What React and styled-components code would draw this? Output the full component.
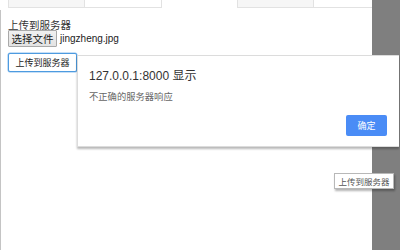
import React from 'react';
import styled, { createGlobalStyle } from 'styled-components';

const GlobalStyle = createGlobalStyle`
  html, body {
    margin: 0;
    padding: 0;
    background: #ffffff;
    overflow: hidden;
  }
  body {
    font-family: 'Liberation Sans', 'Noto Sans CJK SC', sans-serif;
  }
`;

const Page = styled.div`
  display: flex;
  width: 400px;
  height: 250px;
  position: relative;
`;

const Main = styled.div`
  width: 372px;
  display: flex;
  flex-direction: column;
`;

const ScrollGutter = styled.div`
  width: 28px;
  background: #7f7f7f;
`;

const TabStrip = styled.div`
  display: flex;
  height: 8px;
  padding-left: 8px;
`;

const Tab = styled.div`
  box-sizing: border-box;
  width: ${(p) => p.width}px;
  margin-left: ${(p) => p.offset || 0}px;
  height: 8px;
  border: 1px solid #e2e2e2;
  border-top: none;
  border-left: ${(p) => (p.noLeft ? 'none' : '1px solid #e2e2e2')};
  border-right: ${(p) => (p.noRight ? 'none' : '1px solid #e2e2e2')};
  background: ${(p) => (p.shaded ? '#f6f6f6' : '#ffffff')};
`;

const Panel = styled.div`
  flex: 1;
  margin-top: 2px;
  border-left: 1px solid #c4c4c4;
  padding: 9px 0 0 7px;
`;

const Label = styled.div`
  font-size: 10.5px;
  line-height: 11px;
  color: #333;
  font-family: 'Noto Sans CJK SC', sans-serif;
`;

const FileRow = styled.div`
  display: flex;
  align-items: center;
  gap: 3px;
  height: 17px;
`;

const FileButton = styled.div`
  box-sizing: border-box;
  width: 49px;
  height: 17px;
  border: 1px solid #a9a9a9;
  border-radius: 1px;
  background: linear-gradient(#f0f0f0, #e3e3e3);
  font-family: 'Noto Sans CJK SC', sans-serif;
  font-size: 10.5px;
  line-height: 15px;
  text-align: center;
  color: #222;
`;

const FileName = styled.span`
  font-size: 10px;
  color: #222;
`;

const UploadButton = styled.button`
  box-sizing: border-box;
  margin-top: 6px;
  width: 69px;
  height: 19px;
  padding: 0;
  background: #ffffff;
  border: 1px solid #4d9be0;
  box-shadow: 0 0 0 0.5px #8fc0ee;
  border-radius: 2px;
  font-family: 'Noto Sans CJK SC', sans-serif;
  font-size: 9px;
  color: #222;
`;

const Dialog = styled.div`
  position: absolute;
  left: 77px;
  top: 55px;
  width: 322px;
  height: 92px;
  box-sizing: border-box;
  background: #ffffff;
  border: 1px solid #dcdcdc;
  border-right: none;
  box-shadow: 0 2px 2px rgba(0, 0, 0, 0.28);
  padding: 12px 12px 0 11px;
  display: flex;
  flex-direction: column;
`;

const Title = styled.div`
  font-size: 12px;
  line-height: 16px;
  color: #333;
`;

const Message = styled.div`
  margin-top: 6px;
  font-family: 'Noto Sans CJK SC', sans-serif;
  font-size: 9.3px;
  line-height: 12px;
  color: #666;
`;

const Actions = styled.div`
  display: flex;
  justify-content: flex-end;
  margin-top: 13px;
`;

const OkButton = styled.div`
  width: 41px;
  height: 21px;
  border-radius: 2px;
  background: #4a8cf6;
  color: #ffffff;
  font-family: 'Noto Sans CJK SC', sans-serif;
  font-size: 9px;
  line-height: 21px;
  text-align: center;
`;

const Tooltip = styled.div`
  position: absolute;
  left: 334px;
  top: 173px;
  box-sizing: border-box;
  width: 60px;
  height: 16px;
  background: #ffffff;
  border: 1px solid #b8b8b8;
  box-shadow: 1px 2px 2px rgba(0, 0, 0, 0.3);
  font-family: 'Noto Sans CJK SC', sans-serif;
  font-size: 8.5px;
  line-height: 14px;
  color: #555;
  text-align: center;
`;

export default function App() {
  return (
    <>
      <GlobalStyle />
      <Page>
        <Main>
          <TabStrip>
            <Tab width={77} shaded />
            <Tab width={77} noLeft />
            <Tab width={77} offset={75} shaded />
            <Tab width={58} noLeft noRight />
          </TabStrip>
          <Panel>
            <Label>上传到服务器</Label>
            <FileRow>
              <FileButton>选择文件</FileButton>
              <FileName>jingzheng.jpg</FileName>
            </FileRow>
            <UploadButton>上传到服务器</UploadButton>
          </Panel>
        </Main>
        <ScrollGutter />
        <Dialog>
          <Title>127.0.0.1:8000 显示</Title>
          <Message>不正确的服务器响应</Message>
          <Actions>
            <OkButton>确定</OkButton>
          </Actions>
        </Dialog>
        <Tooltip>上传到服务器</Tooltip>
      </Page>
    </>
  );
}
